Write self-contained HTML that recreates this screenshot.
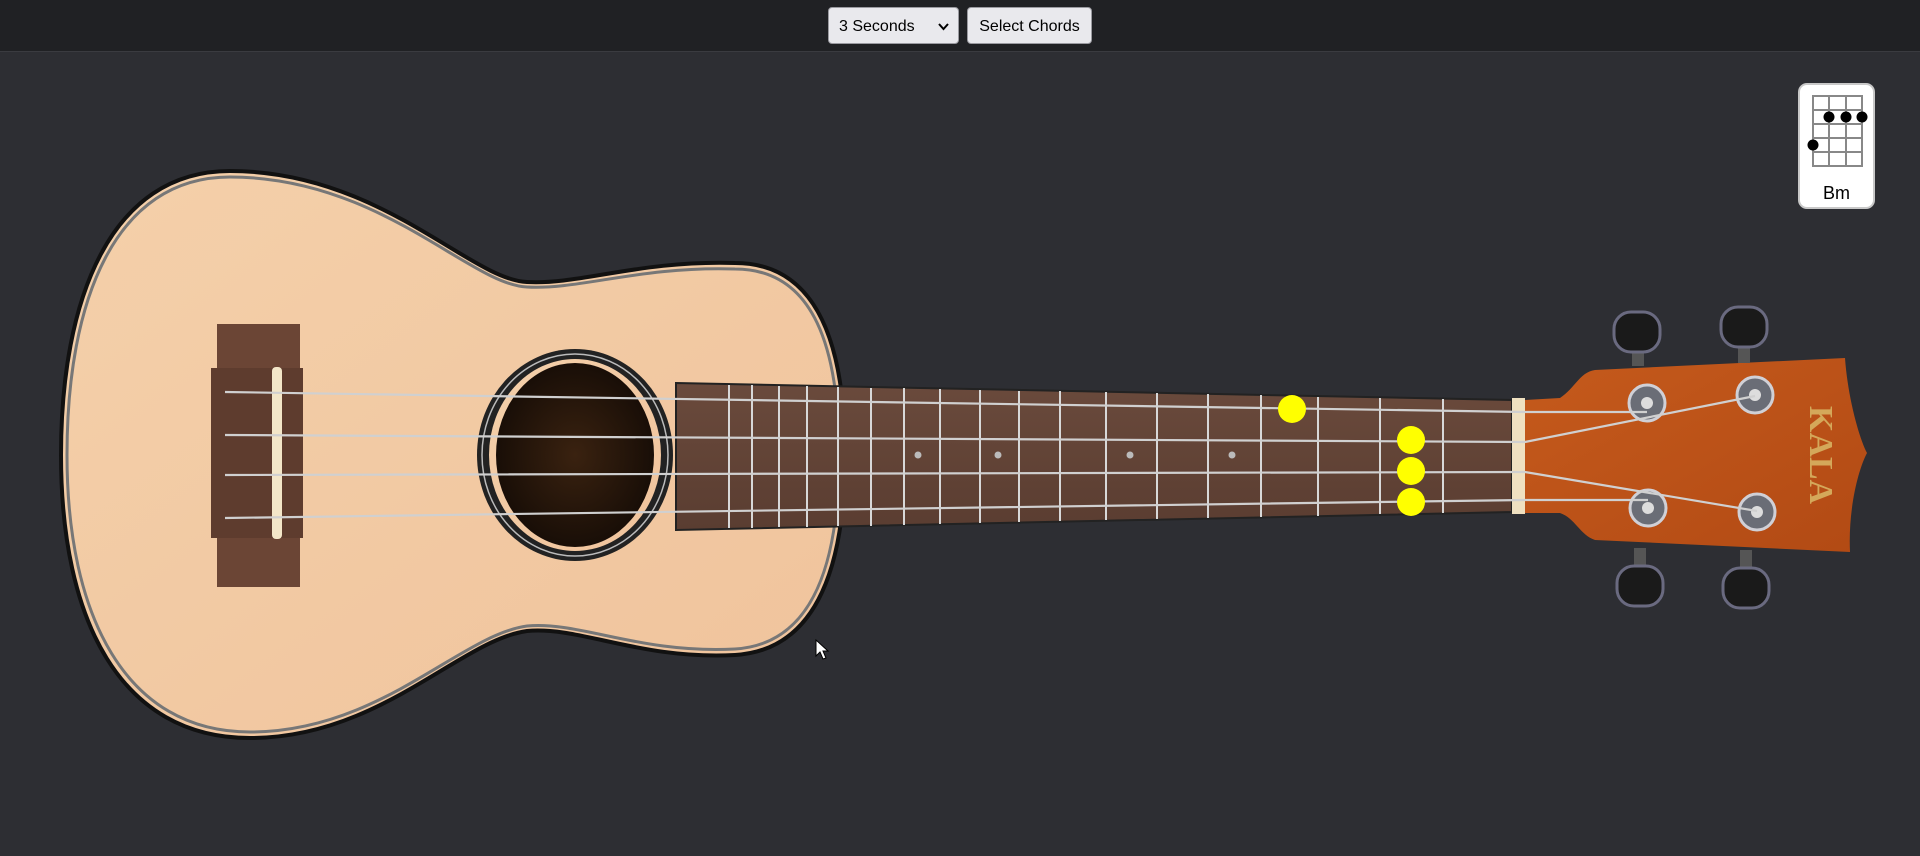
<!DOCTYPE html>
<html><head><meta charset="utf-8"><style>
html,body{margin:0;padding:0;width:1920px;height:856px;overflow:hidden;background:#2d2e33;font-family:"Liberation Sans",Arial,sans-serif}
.bar{position:absolute;left:0;top:0;width:1920px;height:51px;background:#202124;border-bottom:1px solid #3a3b40}
.sel{position:absolute;left:828px;top:7px;width:131px;height:37px;box-sizing:border-box;border:1px solid #9a9aa0;border-radius:4px;background:#e9e9ed;font-size:16px;color:#000;line-height:38px;padding-left:10px}
.sel svg{position:absolute;right:9px;top:15px}
.btn{position:absolute;left:967px;top:7px;width:125px;height:37px;box-sizing:border-box;border:1px solid #9a9aa0;border-radius:4px;background:#e9e9ed;font-size:16px;color:#000;line-height:38px;text-align:center}
.card{position:absolute;left:1798px;top:83px;width:77px;height:126px;box-sizing:border-box;background:#fff;border:2px solid #c8c8c8;border-radius:9px}
.card .lbl{position:absolute;left:0;right:0;top:98px;text-align:center;font-size:18px;color:#000}
</style></head><body>
<div class="bar"><div class="sel">3 Seconds<svg width="11" height="8"><path d="M1,1 L5.5,6 L10,1" stroke="#000" stroke-width="2" fill="none"/></svg></div><div class="btn">Select Chords</div></div>
<div class="card">
<svg width="77" height="100" style="position:absolute;left:-2px;top:-2px">
<g stroke="#888" stroke-width="2" fill="none">
<rect x="15" y="13" width="49" height="70"/>
<line x1="15" y1="27" x2="64" y2="27"/><line x1="15" y1="41" x2="64" y2="41"/><line x1="15" y1="55" x2="64" y2="55"/><line x1="15" y1="69" x2="64" y2="69"/>
<line x1="31" y1="13" x2="31" y2="83"/><line x1="48" y1="13" x2="48" y2="83"/>
</g>
<g fill="#000"><circle cx="31" cy="34" r="5.5"/><circle cx="48" cy="34" r="5.5"/><circle cx="64" cy="34" r="5.5"/><circle cx="15" cy="62" r="5.5"/></g>
</svg>
<div class="lbl">Bm</div></div>
<svg width="1920" height="856" style="position:absolute;left:0;top:0">
<defs>
<linearGradient id="wood" x1="0" y1="0" x2="1" y2="1"><stop offset="0" stop-color="#f4d0aa"/><stop offset="1" stop-color="#f0c39c"/></linearGradient>
<linearGradient id="fb" x1="0" y1="0" x2="0" y2="1"><stop offset="0" stop-color="#6a4a3c"/><stop offset="1" stop-color="#5a3d31"/></linearGradient>
<radialGradient id="hole" cx="0.5" cy="0.5" r="0.6"><stop offset="0" stop-color="#3a2210"/><stop offset="1" stop-color="#120a05"/></radialGradient>
<linearGradient id="head" x1="0" y1="0" x2="1" y2="1"><stop offset="0" stop-color="#c55a1c"/><stop offset="1" stop-color="#b24a14"/></linearGradient>
</defs>
<path d="M527,282 C470,280 380,171 230,171 C110,171 61,300 61,455 C61,620 120,738 250,738 C380,738 460,640 527,631 C580,626 640,660 735,655 C820,650 845,560 845,455 C845,350 820,263 735,263 C640,260 580,285 527,282 Z" fill="url(#wood)" stroke="#111" stroke-width="4"/>
<path d="M527,287 C470,285 380,177 230,177 C115,177 67,300 67,455 C67,615 125,732 250,732 C380,732 460,635 527,626 C580,621 640,654 735,649 C815,644 839,560 839,455 C839,350 815,269 735,269 C640,266 580,290 527,287 Z" fill="none" stroke="#777" stroke-width="3"/>
<ellipse cx="575" cy="455" rx="98" ry="106" fill="#222"/>
<ellipse cx="575" cy="455" rx="93" ry="101" fill="none" stroke="#bbb" stroke-width="1.5"/>
<ellipse cx="575" cy="455" rx="86" ry="96" fill="url(#wood)"/>
<ellipse cx="575" cy="455" rx="79" ry="92" fill="url(#hole)"/>
<rect x="217" y="324" width="83" height="263" fill="#6b4535"/>
<rect x="211" y="368" width="92" height="170" fill="#5e3c2e"/>
<rect x="272" y="367" width="10" height="172" rx="4" fill="#f3e6c8"/>
<polygon points="676,383 1512,400 1512,512 676,530" fill="url(#fb)" stroke="#222" stroke-width="2"/>
<g stroke="#d8d8d8" stroke-width="2">
<line x1="729" y1="385" x2="729" y2="528"/><line x1="752" y1="385" x2="752" y2="528"/><line x1="779" y1="386" x2="779" y2="527"/><line x1="807" y1="386" x2="807" y2="527"/><line x1="838" y1="387" x2="838" y2="526"/><line x1="871" y1="388" x2="871" y2="526"/><line x1="904" y1="388" x2="904" y2="525"/><line x1="940" y1="389" x2="940" y2="524"/><line x1="980" y1="390" x2="980" y2="523"/><line x1="1019" y1="391" x2="1019" y2="522"/><line x1="1060" y1="391" x2="1060" y2="521"/><line x1="1106" y1="392" x2="1106" y2="520"/><line x1="1157" y1="393" x2="1157" y2="519"/><line x1="1208" y1="394" x2="1208" y2="518"/><line x1="1261" y1="395" x2="1261" y2="517"/><line x1="1318" y1="397" x2="1318" y2="516"/><line x1="1380" y1="398" x2="1380" y2="514"/><line x1="1443" y1="399" x2="1443" y2="513"/>
</g>
<g fill="#bbb"><circle cx="918" cy="455" r="3.5"/><circle cx="998" cy="455" r="3.5"/><circle cx="1130" cy="455" r="3.5"/><circle cx="1232" cy="455" r="3.5"/></g>
<path d="M1525,400 L1560,398 C1575,388 1580,372 1595,370 L1845,358 C1848,400 1860,440 1867,453 C1858,470 1848,510 1850,552 L1595,540 C1580,535 1575,518 1560,513 L1525,513 Z" fill="url(#head)"/>
<text x="1810" y="455" font-family="Liberation Serif,serif" font-size="34" font-weight="bold" fill="#d4a85a" transform="rotate(90 1810 455)" text-anchor="middle">KALA</text>
<rect x="1512" y="398" width="13" height="116" fill="#efe0c0"/>
<g fill="#555"><rect x="1632" y="348" width="12" height="18"/><rect x="1738" y="343" width="12" height="20"/><rect x="1634" y="548" width="12" height="22"/><rect x="1740" y="550" width="12" height="22"/></g>
<g fill="#1a1a1a" stroke="#6a6a80" stroke-width="3">
<rect x="1614" y="312" width="46" height="40" rx="17"/><rect x="1721" y="307" width="46" height="40" rx="17"/>
<rect x="1617" y="566" width="46" height="40" rx="17"/><rect x="1723" y="568" width="46" height="40" rx="17"/>
</g>
<g fill="#6a6d76" stroke="#d0d0d6" stroke-width="3">
<circle cx="1647" cy="403" r="18"/><circle cx="1755" cy="395" r="18"/><circle cx="1648" cy="508" r="18"/><circle cx="1757" cy="512" r="18"/>
</g>
<g fill="#ddd"><circle cx="1647" cy="403" r="6"/><circle cx="1755" cy="395" r="6"/><circle cx="1648" cy="508" r="6"/><circle cx="1757" cy="512" r="6"/></g>
<g stroke="#d0d0d0" stroke-width="2.2" fill="none">
<path d="M225,392 L1525,412 L1647,412"/>
<path d="M225,435 L1525,442 L1755,396"/>
<path d="M225,475 L1525,472 L1757,511"/>
<path d="M225,518 L1525,500 L1648,500"/>
</g>
<g fill="#ff0"><circle cx="1292" cy="409" r="14"/><circle cx="1411" cy="440" r="14"/><circle cx="1411" cy="471" r="14"/><circle cx="1411" cy="502" r="14"/></g>
<path d="M816,640 L816,656 L820,652 L823,659 L826,658 L823,651 L828,651 Z" fill="#fff" stroke="#000" stroke-width="1"/>
</svg>
</body></html>
